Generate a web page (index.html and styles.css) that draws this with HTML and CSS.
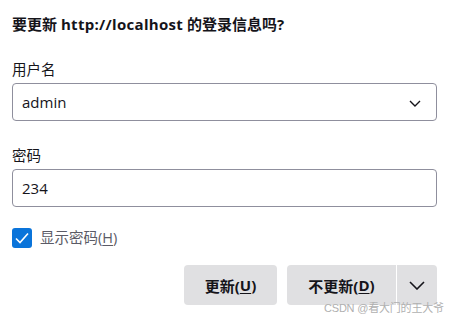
FILE: index.html
```html
<!DOCTYPE html>
<html lang="zh-CN">
<head>
<meta charset="utf-8">
<link rel="stylesheet" href="styles.css">
</head>
<body>
<div class="panel">
  <h1 class="title">要更新 <span class="lat">http://localhost</span> 的登录信息吗?</h1>
  <label class="label">用户名</label>
  <div class="field select">
    <span class="value">admin</span>
    <svg class="chev" width="12" height="7" viewBox="0 0 12 7"><path d="M1 1l5 5 5-5" fill="none" stroke="#15141a" stroke-width="1.4"/></svg>
  </div>
  <label class="label pw">密码</label>
  <div class="field"><span class="value">234</span></div>
  <div class="check-row">
    <span class="box"><svg width="20" height="20" viewBox="0 0 20 20"><path d="M4 10.5l4 4 8-9" fill="none" stroke="#fff" stroke-width="1.6"/></svg></span>
    <span class="check-label">显示密码(<u>H</u>)</span>
  </div>
  <div class="actions">
    <button class="btn primary">更新(<u>U</u>)</button>
    <div class="split">
      <button class="btn main">不更新(<u>D</u>)</button>
      <button class="btn drop"><svg width="16" height="9" viewBox="0 0 16 9"><path d="M1 1l7 7 7-7" fill="none" stroke="#15141a" stroke-width="1.6"/></svg></button>
    </div>
  </div>
  <div class="watermark">CSDN @看大门的王大爷</div>
</div>
</body>
</html>
```
FILE: styles.css
```css
* { box-sizing: border-box; }
html, body { margin: 0; padding: 0; background: #fff; }
body {
  font-family: "Open Sans", "Noto Sans CJK SC", sans-serif;
  color: #15141a;
  width: 456px;
  height: 323px;
  overflow: hidden;
}
.panel {
  position: relative;
  padding: 14px 19px 0 12px;
  display: flex;
  flex-direction: column;
}
.title {
  margin: 0;
  font-size: 15px;
  font-weight: 700;
  line-height: 20px;
}
.title .lat { letter-spacing: 0.3px; }
.label {
  display: block;
  margin-top: 26px;
  font-size: 14.5px;
  line-height: 20px;
}
.label.pw { margin-top: 25px; }
.field {
  margin-top: 3px;
  height: 38px;
  border: 1px solid #8f8f9d;
  border-radius: 4px;
  display: flex;
  align-items: center;
  justify-content: space-between;
  padding: 0 15px 0 9px;
}
.value {
  font-size: 15px;
  line-height: 20px;
}
.chev { display: block; margin-top: 2px; }
.check-row {
  margin-top: 21px;
  display: flex;
  align-items: center;
  gap: 8px;
}
.box {
  width: 20px;
  height: 20px;
  border-radius: 3px;
  background: #0a74da;
  display: flex;
}
.check-label {
  font-size: 14.5px;
  line-height: 20px;
  color: #5b5b66;
}
.check-label u { text-underline-offset: 2px; }
.actions {
  margin-top: 17px;
  display: flex;
  justify-content: flex-end;
  gap: 10px;
}
.btn {
  font-family: inherit;
  height: 40px;
  border: none;
  background: #e0e0e2;
  color: #15141a;
  font-size: 15px;
  font-weight: 700;
  padding: 0;
  display: flex;
  align-items: center;
  justify-content: center;
}
.btn u { text-underline-offset: 2px; }
.btn.primary { width: 93px; border-radius: 4px; }
.split { display: flex; gap: 1px; }
.btn.main { width: 109px; border-radius: 4px 0 0 4px; }
.btn.drop { width: 40px; border-radius: 0 4px 4px 0; }
.watermark {
  position: absolute;
  left: 324px;
  top: 301px;
  font-family: "Liberation Sans", "Noto Sans CJK SC", sans-serif;
  font-size: 11px;
  letter-spacing: -0.2px;
  line-height: 14px;
  color: #b0b0b0;
  white-space: nowrap;
}
```
